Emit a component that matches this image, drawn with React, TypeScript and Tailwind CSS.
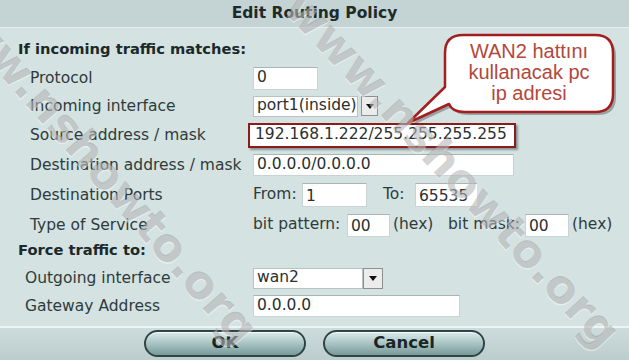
import React from 'react';

const labelFont = { fontFamily: '"DejaVu Sans", Verdana, sans-serif' };

function Field({ w, value, className = '' }: { w: string; value: string; className?: string }) {
  return (
    <div
      className={`${w} h-[22px] bg-white border border-[#c9d3d3] border-t-[#a9b5b5] flex items-center pl-[3px] text-[15.5px] text-[#2a2f2f] overflow-hidden whitespace-nowrap ${className}`}
    >
      {value}
    </div>
  );
}

function Select({ w, value, arrow }: { w: string; value: string; arrow: string }) {
  return (
    <div className="flex items-center h-[21px]">
      <div
        className={`${w} h-[21px] bg-white border border-[#b8c2c2] flex items-center pl-[3px] text-[15.5px] text-[#2a2f2f] whitespace-nowrap`}
      >
        {value}
      </div>
      <div
        className={`${arrow} h-[20px] bg-[#ececec] border border-[#8a8f8f] flex items-center justify-center`}
      >
        <svg width="8" height="5" viewBox="0 0 8 5">
          <path d="M0 0 H8 L4 5 Z" fill="#111" />
        </svg>
      </div>
    </div>
  );
}

function Row({ h, label, lw = 'w-[223px]', pl = 'pl-[30px]', children }: any) {
  return (
    <div className={`flex items-center ${h} ${pl}`}>
      <div className={`${lw} shrink-0 text-[15.5px] text-[#2f3b3b] whitespace-nowrap pt-[1px]`}>{label}</div>
      <div className="flex items-center">{children}</div>
    </div>
  );
}

export default function App() {
  return (
    <div
      className="relative w-[629px] h-[360px] overflow-hidden bg-[#d4e2e2] flex flex-col"
      style={labelFont}
    >
      {/* title bar */}
      <div className="h-[28px] shrink-0 bg-[#c4d3d3] border-b border-[#e6efef] flex items-center justify-center">
        <span className="text-[15.5px] font-bold text-[#1e2b2b]">Edit Routing Policy</span>
      </div>

      <div className="flex flex-col pt-[10px]">
        <div className="h-[22px] pl-[18px] flex items-center text-[14.7px] font-bold text-[#1b2929]">
          If incoming traffic matches:
        </div>
        <div className="h-[4px]" />
        <Row h="h-[28px]" label="Protocol">
          <Field w="w-[65px]" value="0" className="h-[23px]" />
        </Row>
        <Row h="h-[28px]" label="Incoming interface">
          <Select w="w-[105px]" value="port1(inside)" arrow="w-[17px] ml-[3px]" />
        </Row>
        <Row h="h-[30px]" label="Source address / mask" lw="w-[218px]">
          <div className="w-[268px] h-[25px] bg-white border-2 border-[#8c1c1c] shadow-[2px_2px_2px_rgba(0,0,0,0.35)] flex items-center pl-[5px] text-[15.5px] text-[#2a2f2f] whitespace-nowrap">
            192.168.1.222/255.255.255.255
          </div>
        </Row>
        <Row h="h-[30px]" label="Destination address / mask">
          <Field w="w-[261px]" value="0.0.0.0/0.0.0.0" />
        </Row>
        <Row h="h-[30px]" label="Destination Ports">
          <span className="w-[49px] text-[15.5px] text-[#2f3b3b]">From:</span>
          <Field w="w-[65px]" value="1" className="h-[24px] pt-[3px]" />
          <span className="ml-[16px] w-[32px] text-[15.5px] text-[#2f3b3b]">To:</span>
          <Field w="w-[62px]" value="65535" className="h-[24px] pt-[3px] border-r-0" />
        </Row>
        <Row h="h-[30px]" label="Type of Service">
          <span className="w-[94px] text-[15.5px] text-[#2f3b3b] whitespace-nowrap">bit pattern:</span>
          <Field w="w-[43px]" value="00" className="h-[23px] pt-[3px]" />
          <span className="ml-[3px] w-[55px] text-[15.5px] text-[#2f3b3b]">(hex)</span>
          <span className="w-[77px] text-[15.5px] text-[#2f3b3b] whitespace-nowrap">bit mask:</span>
          <Field w="w-[44px]" value="00" className="h-[23px] pt-[3px]" />
          <span className="ml-[3px] text-[15.5px] text-[#2f3b3b]">(hex)</span>
        </Row>
        <div className="h-[20px] pl-[18px] flex items-center text-[14.7px] font-bold text-[#1b2929]">
          Force traffic to:
        </div>
        <div className="h-[4px]" />
        <Row h="h-[28px]" label="Outgoing interface" lw="w-[228px]" pl="pl-[25px]">
          <Select w="w-[110px]" value="wan2" arrow="w-[20px] h-[21px]" />
        </Row>
        <Row h="h-[28px]" label="Gateway Address" lw="w-[228px]" pl="pl-[25px]">
          <Field w="w-[207px]" value="0.0.0.0" className="h-[21px]" />
        </Row>
      </div>

      {/* button bar */}
      <div className="mt-auto h-[34px] shrink-0 border-t-2 border-[#eef4f4] bg-linear-to-b from-[#cddcdc] to-[#bccdcd] flex items-center justify-center gap-[17px] pb-[2px]">
        {['OK', 'Cancel'].map((t) => (
          <div
            key={t}
            className="w-[162px] h-[27px] rounded-full border-2 border-[#2e4545] bg-linear-to-b from-[#dcebeb] via-[#a8c3c3] to-[#7a9a9a] shadow-[inset_0_1px_0_rgba(255,255,255,0.7)] flex items-center justify-center text-[16.5px] font-bold text-[#1a2626]"
          >
            {t}
          </div>
        ))}
      </div>

      {/* callout */}
      <svg className="absolute inset-0 pointer-events-none" width="629" height="360">
        <path
          d="M463 35 H595 Q613 35 613 53 V94 Q613 112 595 112 H465 Q452 112 449 104 L408 123 L445 87 V53 Q445 35 463 35 Z"
          fill="rgba(0,0,0,0.28)"
          transform="translate(3 3)"
        />
        <path
          d="M463 35 H595 Q613 35 613 53 V94 Q613 112 595 112 H465 Q452 112 449 104 L408 123 L445 87 V53 Q445 35 463 35 Z"
          fill="#ffffff"
          stroke="#a31e1e"
          strokeWidth="2.5"
          strokeLinejoin="round"
        />
      </svg>
      <div
        className="absolute left-[445px] top-[41px] w-[168px] flex flex-col items-center text-[20px] leading-[21px] text-[#b3473b]"
        style={{ fontFamily: '"Liberation Sans", Arial, sans-serif' }}
      >
        <span>WAN2 hattını</span>
        <span>kullanacak pc</span>
        <span>ip adresi</span>
      </div>

      {/* watermarks */}
      <div className="absolute left-[-32px] top-[-38px] origin-top-left rotate-[49deg] whitespace-nowrap text-[46px] font-bold text-[rgba(105,105,105,0.28)] [text-shadow:1px_1px_0_rgba(255,255,255,0.45)] pointer-events-none">
        www.nshowto.org
      </div>
      <div className="absolute left-[318px] top-[-25px] origin-top-left rotate-[47deg] whitespace-nowrap text-[46px] font-bold text-[rgba(105,105,105,0.28)] [text-shadow:1px_1px_0_rgba(255,255,255,0.45)] pointer-events-none">
        www.nshowto.org
      </div>
    </div>
  );
}
